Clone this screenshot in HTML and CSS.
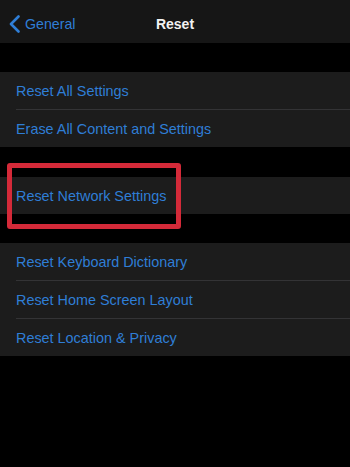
FILE: index.html
```html
<!DOCTYPE html>
<html>
<head>
<meta charset="utf-8">
<link rel="stylesheet" href="styles.css">
</head>
<body>
<div class="screen">
  <header class="nav">
    <div class="back">
      <svg class="chev" width="14" height="18" viewBox="0 0 14 18"><path d="M10.5 1.5 L3 9 L10.5 16.5" fill="none" stroke="#2f7ed6" stroke-width="2.6" stroke-linecap="round" stroke-linejoin="round"/></svg>
      <span>General</span>
    </div>
    <div class="title">Reset</div>
  </header>
  <div class="gap"></div>
  <section class="group">
    <div class="row">Reset All Settings</div>
    <div class="row">Erase All Content and Settings</div>
  </section>
  <div class="gap g2"></div>
  <section class="group">
    <div class="row">Reset Network Settings</div>
  </section>
  <div class="gap"></div>
  <section class="group">
    <div class="row">Reset Keyboard Dictionary</div>
    <div class="row">Reset Home Screen Layout</div>
    <div class="row">Reset Location &amp; Privacy</div>
  </section>
  <div class="highlight"></div>
</div>
</body>
</html>
```
FILE: styles.css
```css
html, body {
  margin: 0;
  padding: 0;
  background: #000;
}
.screen {
  position: relative;
  width: 350px;
  height: 467px;
  background: #000;
  font-family: "Liberation Sans", Arial, sans-serif;
  overflow: hidden;
}
.nav {
  height: 43px;
  background: #161616;
  position: relative;
  display: flex;
  align-items: center;
}
.back {
  display: flex;
  align-items: center;
  padding-left: 8px;
  padding-top: 4px;
  color: #2f7ed6;
  font-size: 14.2px;
}
.chev {
  margin-right: 3px;
}
.title {
  position: absolute;
  left: 0;
  right: 0;
  top: 16px;
  text-align: center;
  color: #f2f2f2;
  font-size: 14px;
  font-weight: bold;
}
.gap {
  height: 29px;
}
.g2 {
  height: 30px;
}
.group {
  background: #1c1c1c;
}
.row {
  height: 37px;
  display: flex;
  align-items: center;
  margin-left: 16px;
  color: #2f7ed6;
  font-size: 14.4px;
  border-top: 1px solid #333335;
}
.row:first-child {
  border-top: none;
}
.highlight {
  position: absolute;
  left: 7px;
  top: 163px;
  width: 164px;
  height: 56px;
  border: 5px solid #d42a39;
  border-radius: 3px;
}
```
